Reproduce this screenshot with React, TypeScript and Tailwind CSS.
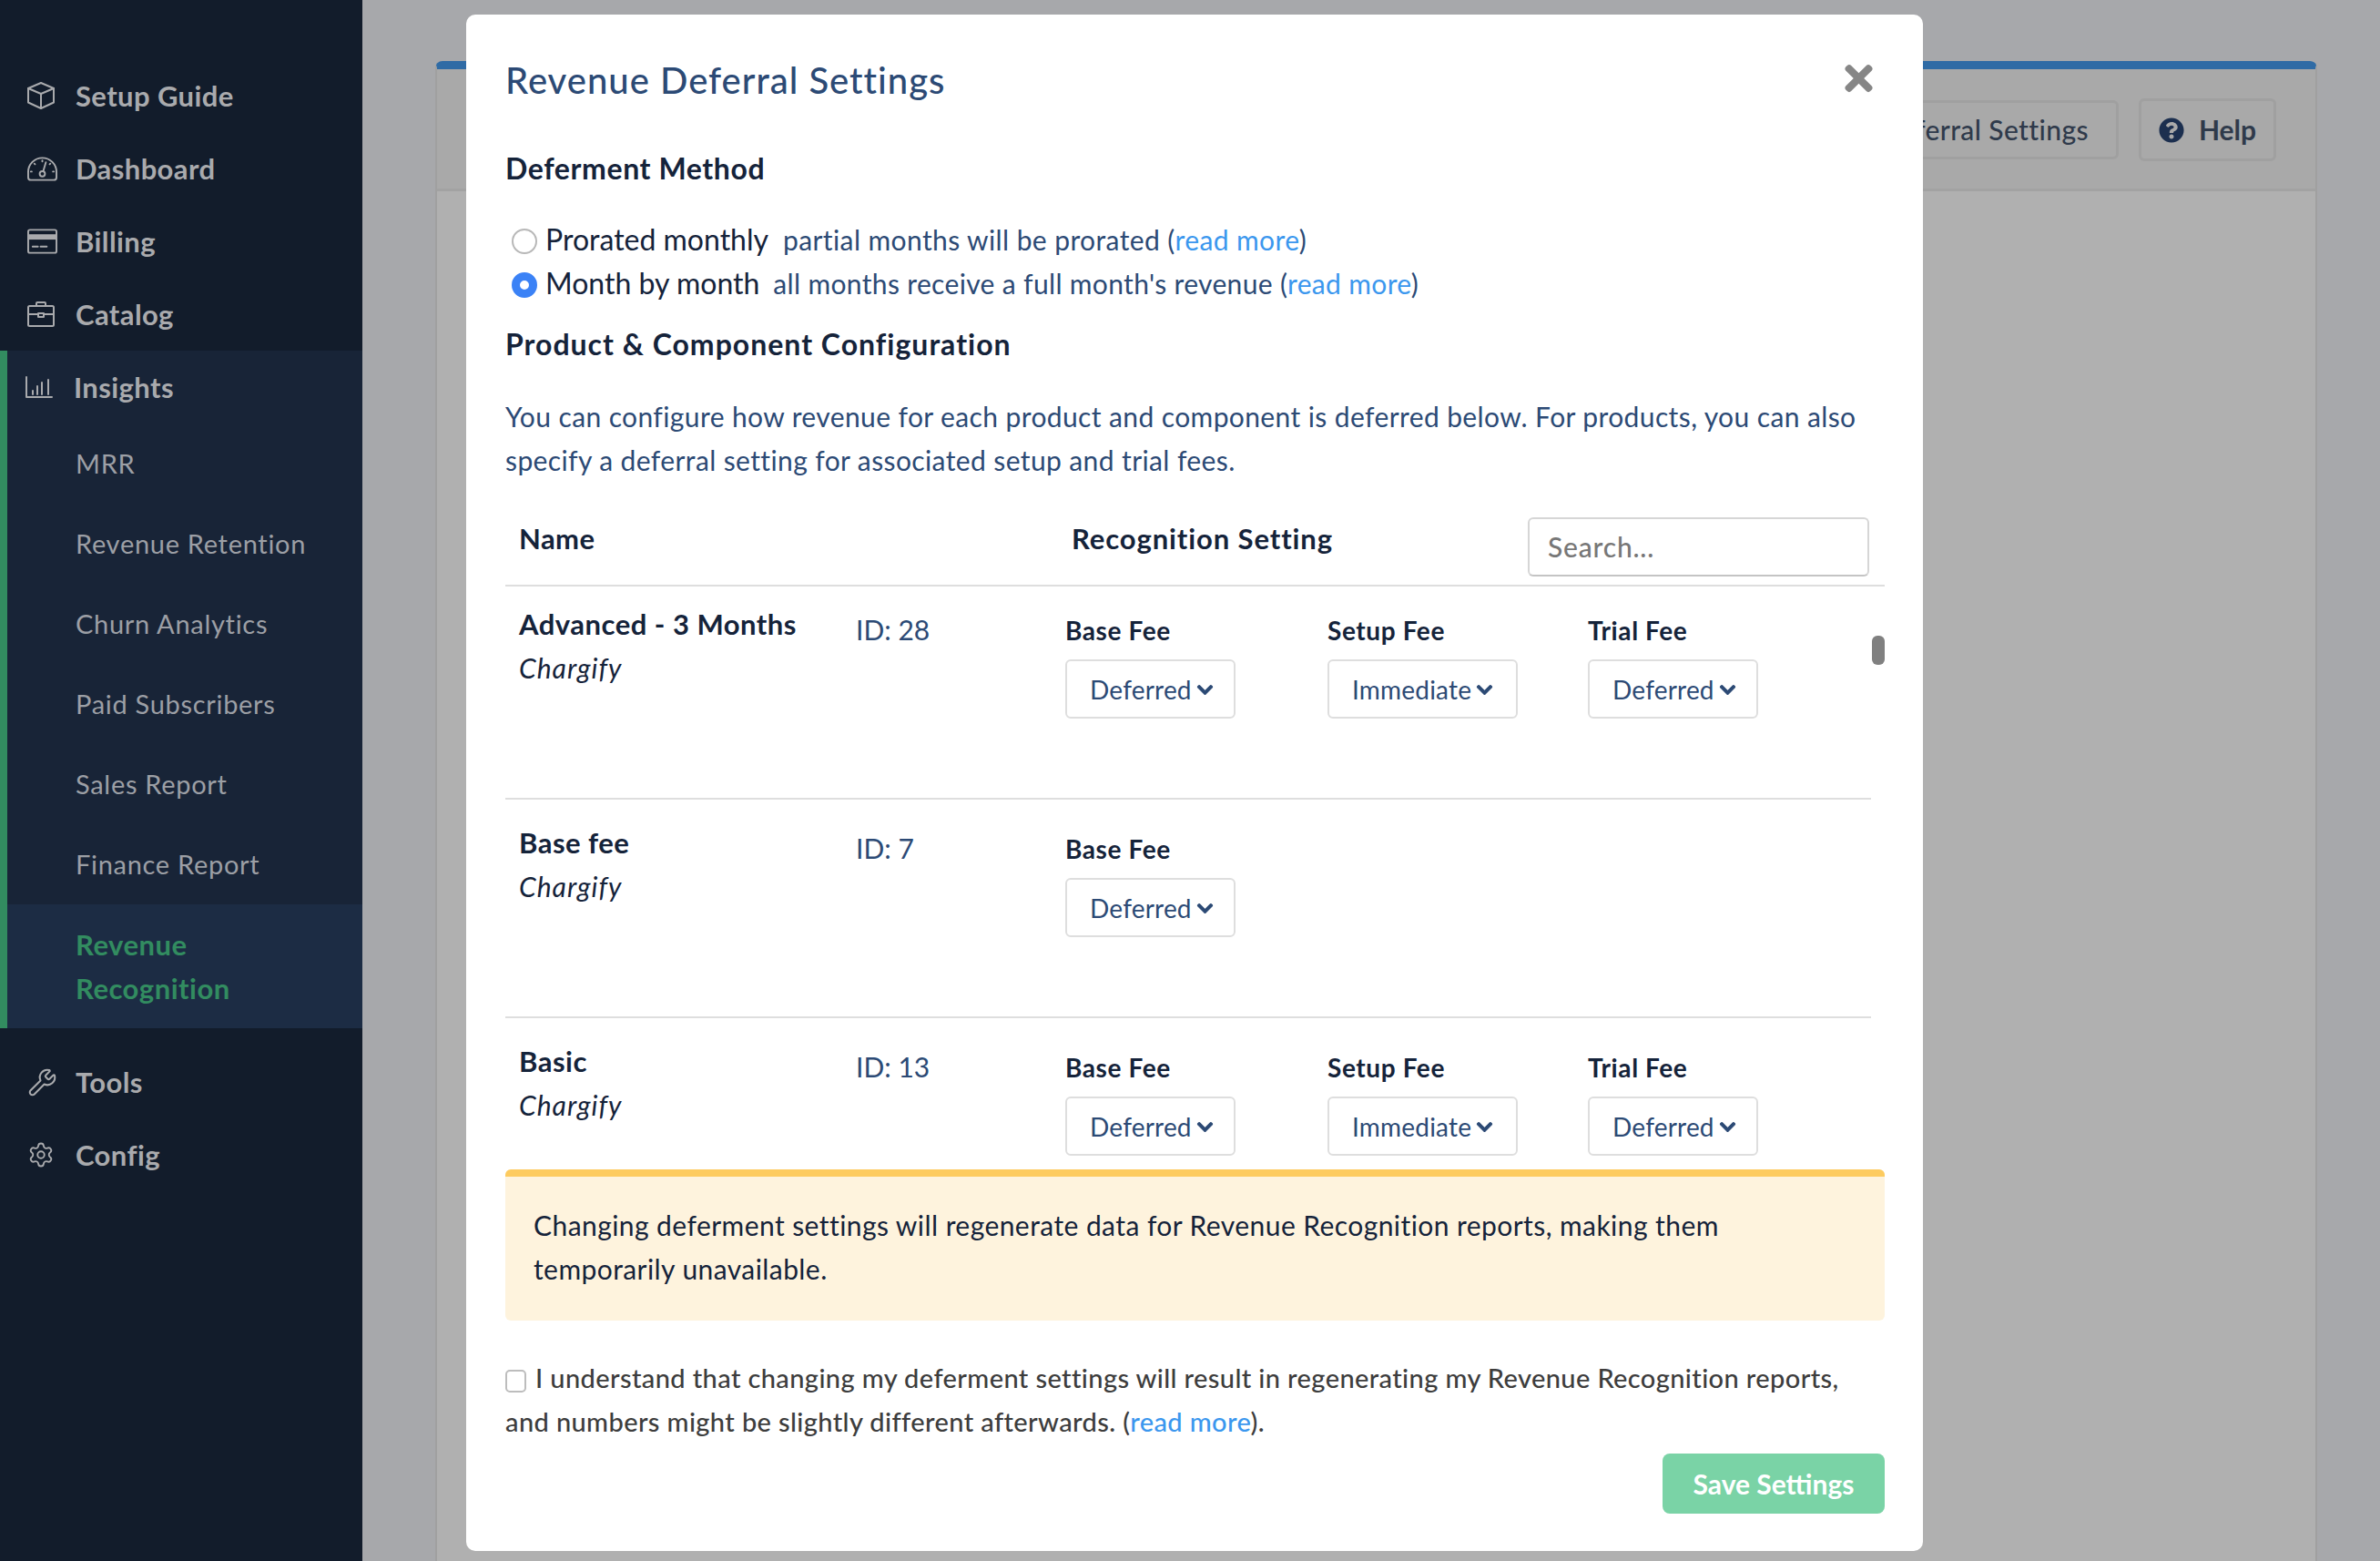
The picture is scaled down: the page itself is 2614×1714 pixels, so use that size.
import { Settings, Wrench } from "lucide-react";
import { FaChevronDown, FaQuestionCircle, FaTimes } from "react-icons/fa";

const iconBase = {
  fill: "none",
  stroke: "currentColor",
  strokeWidth: 2,
  strokeLinecap: "round" as const,
  strokeLinejoin: "round" as const,
};

function BoxIcon() {
  return (
    <svg viewBox="0 0 30 30" {...iconBase} className="h-[30px] w-[30px]">
      <path d="M15 1 L29 7 V22.5 L15 29 L1 22.5 V7 Z" />
      <path d="M1 7 L15 13 L29 7 M15 13 V29" />
    </svg>
  );
}

function GaugeIcon() {
  return (
    <svg viewBox="0 0 34 28" {...iconBase} className="h-[28px] w-[33px]">
      <path d="M4 27 H30 Q33 27 33 24 V18 A16 16 0 0 0 1 18 V24 Q1 27 4 27 Z" />
      <circle cx="17" cy="20" r="3" />
      <path d="M18 17 L21 7" />
      <path d="M17 5 V6 M8 8.5 L8.7 9.2 M26 8.5 L25.3 9.2 M4 17.5 H5 M29 17.5 H30" />
    </svg>
  );
}

function CardIcon() {
  return (
    <svg viewBox="0 0 34 28" {...iconBase} className="h-[28px] w-[33px]">
      <rect x="1" y="1" width="32" height="26" rx="2" />
      <rect x="1" y="6" width="32" height="6" fill="currentColor" stroke="none" />
      <path d="M6 20 H12 M15 20 H22" />
    </svg>
  );
}

function BriefcaseIcon() {
  return (
    <svg viewBox="0 0 30 28" {...iconBase} className="h-[28px] w-[30px]">
      <rect x="1" y="5" width="28" height="22" rx="1.5" />
      <path d="M10 5 V2 Q10 1 11 1 H19 Q20 1 20 2 V5" />
      <path d="M1 14 H12 M18 14 H29" />
      <rect x="12" y="13" width="6" height="4" />
    </svg>
  );
}

function ChartIcon() {
  return (
    <svg viewBox="0 0 30 24" {...iconBase} className="h-[24px] w-[30px]">
      <path d="M1 1 V23 H29" />
      <path d="M8 16 V20 M13 11 V20 M18 7 V20 M25 4 V20" />
    </svg>
  );
}

function NavItem({ icon, label }: { icon: React.ReactNode; label: string }) {
  return (
    <div className="flex h-20 items-center text-[31px] font-bold tracking-[.4px] text-[#a9aaad]">
      <div className="flex w-[83px] justify-start pl-[30px]">{icon}</div>
      <span>{label}</span>
    </div>
  );
}

function SubItem({ label }: { label: string }) {
  return (
    <div className="flex h-[88px] items-center pl-[75px] text-[29px] tracking-[.7px] text-[#9c9fa5]">
      {label}
    </div>
  );
}

function Sidebar() {
  return (
    <aside className="h-full w-[398px] shrink-0 bg-[#121c2b] pt-[65px]">
      <NavItem icon={<BoxIcon />} label="Setup Guide" />
      <NavItem icon={<GaugeIcon />} label="Dashboard" />
      <NavItem icon={<CardIcon />} label="Billing" />
      <NavItem icon={<BriefcaseIcon />} label="Catalog" />
      <div className="border-l-8 border-[#328c60] bg-[#182437]">
        <div className="flex h-20 items-center text-[31px] font-bold tracking-[.4px] text-[#a9aaad]">
          <div className="w-[73px] pl-5">
            <ChartIcon />
          </div>
          <span>Insights</span>
        </div>
        <SubItem label="MRR" />
        <SubItem label="Revenue Retention" />
        <SubItem label="Churn Analytics" />
        <SubItem label="Paid Subscribers" />
        <SubItem label="Sales Report" />
        <SubItem label="Finance Report" />
        <div className="bg-[#1c2c44] py-5 pl-[75px] text-[31px] leading-[48px] font-bold tracking-[.5px] text-[#328c60]">
          Revenue
          <br />
          Recognition
        </div>
      </div>
      <div className="mt-[19px]">
        <NavItem icon={<Wrench className="h-[33px] w-[33px]" strokeWidth={1.5} />} label="Tools" />
        <NavItem icon={<Settings className="h-[30px] w-[30px]" strokeWidth={1.5} />} label="Config" />
      </div>
    </aside>
  );
}

function Select({ value, width }: { value: string; width: string }) {
  return (
    <div
      className={`flex h-[65px] items-center rounded-md border-2 border-[#dedede] pt-px pl-[25px] text-[28px] tracking-[.2px] text-[#2c4a75] ${width}`}
    >
      <span>{value}</span>
      <FaChevronDown className="ml-[5px] h-[19px] w-[19px] stroke-current stroke-[30] text-[#2c4a75]" />
    </div>
  );
}

function Fee({ label, value, width, col }: { label: string; value: string; width: string; col: string }) {
  return (
    <div className={col}>
      <div className="text-[28px] leading-[48px] font-bold tracking-[.6px] text-[#15233a]">{label}</div>
      <div className="mt-2">
        <Select value={value} width={width} />
      </div>
    </div>
  );
}

function Row({
  name,
  id,
  fees,
  first,
}: {
  name: string;
  id: number;
  fees: "all" | "base";
  first?: boolean;
}) {
  return (
    <div
      className={`flex border-b-2 border-[#dedede] ${first ? "h-[234px] pt-[17px]" : "h-[240px] pt-[23px]"}`}
    >
      <div className="w-[385px] pl-[15px] text-[#15233a]">
        <div className="text-[31px] leading-[48px] font-bold tracking-[.5px]">{name}</div>
        <div className="text-[30px] leading-[48px] tracking-[1px] italic">Chargify</div>
      </div>
      <div className="mt-[6px] w-[230px] text-[30px] leading-[48px] text-[#2c4a75]">ID: {id}</div>
      <div className="mt-[7px] flex">
        <Fee label="Base Fee" value="Deferred" width="w-[187px]" col="w-[288px]" />
        {fees === "all" && <Fee label="Setup Fee" value="Immediate" width="w-[209px]" col="w-[286px]" />}
        {fees === "all" && <Fee label="Trial Fee" value="Deferred" width="w-[187px]" col="w-[287px]" />}
      </div>
    </div>
  );
}

function Modal() {
  return (
    <div className="absolute top-4 left-[512px] flex h-[1687px] w-[1600px] flex-col rounded-[10px] bg-white pt-12 pr-[42px] pl-[43px]">
      <div className="flex items-center justify-between pr-[12px]">
        <h1 className="text-[40px] leading-[48px] font-medium tracking-[1px] text-[#2c4a75]">
          Revenue Deferral Settings
        </h1>
        <FaTimes className="-mt-1 h-[44px] w-[33px] text-[#868686]" />
      </div>

      <h2 className="mt-[49px] text-[32px] leading-[48px] font-bold tracking-[.6px] text-[#15233a]">
        Deferment Method
      </h2>

      <div className="mt-[30px]">
        <div className="flex h-[48px] items-center pl-[7px]">
          <span className="h-7 w-7 translate-y-[2px] rounded-full border-2 border-[#b8b8b8] bg-white" />
          <span className="ml-[9px] text-[32px] text-[#15233a]">Prorated monthly</span>
          <span className="ml-4 text-[30px] tracking-[.4px] text-[#2c4a75]">
            partial months will be prorated (<span className="text-[#3b97ee]">read more</span>)
          </span>
        </div>
        <div className="flex h-[48px] items-center pl-[7px]">
          <span className="h-7 w-7 translate-y-[2px] rounded-full border-[9px] border-[#3b82f6] bg-white" />
          <span className="ml-[9px] text-[32px] text-[#15233a]">Month by month</span>
          <span className="ml-[15px] text-[30px] tracking-[.34px] text-[#2c4a75]">
            all months receive a full month's revenue (<span className="text-[#3b97ee]">read more</span>)
          </span>
        </div>
      </div>

      <h2 className="mt-[19px] text-[32px] leading-[48px] font-bold tracking-[1px] text-[#15233a]">
        Product &amp; Component Configuration
      </h2>

      <p className="mt-[31px] text-[30px] leading-[48px] tracking-[.39px] text-[#2c4a75]">
        You can configure how revenue for each product and component is deferred below. For products, you can also
        <br />
        specify a deferral setting for associated setup and trial fees.
      </p>

      <div className="flex h-[115px] items-start border-b-2 border-[#dedede] pt-[39px]">
        <div className="-mt-px w-[622px] pl-[15px] text-[31px] leading-[48px] font-bold tracking-[.4px] text-[#15233a]">
          Name
        </div>
        <div className="-mt-px w-[501px] text-[31px] leading-[48px] font-bold tracking-[.9px] text-[#15233a]">
          Recognition Setting
        </div>
        <div className="flex h-[65px] w-[375px] items-center rounded-md border-2 border-[#d6d6d6] border-b-[#c4c4c4] pl-5 text-[30px] font-medium tracking-[.8px] text-[#777777]">
          Search...
        </div>
      </div>

      <div className="relative h-[640px] overflow-hidden pr-[15px]">
        <Row name="Advanced - 3 Months" id={28} fees="all" first />
        <Row name="Base fee" id={7} fees="base" />
        <Row name="Basic" id={13} fees="all" />
        <div className="absolute top-[54px] right-0 h-8 w-[14px] rounded-md bg-[#808080]" />
      </div>

      <div className="h-[166px] rounded-md border-t-8 border-[#fdcb5f] bg-[#fef3dd] pt-[29px] pl-[31px] text-[30px] leading-[48px] tracking-[.43px] text-[#15233a]">
        Changing deferment settings will regenerate data for Revenue Recognition reports, making them
        <br />
        temporarily unavailable.
      </div>

      <p className="mt-[39px] text-[29px] leading-[48px] font-medium tracking-[.39px] text-[#3d3d3d]">
        <span className="mr-[10px] inline-block h-[25px] w-[23px] translate-y-[5px] rounded-[5px] border-2 border-[#bdbdbd] bg-white" />
        I understand that changing my deferment settings will result in regenerating my Revenue Recognition reports,
        <br />
        and numbers might be slightly different afterwards. (<span className="text-[#3b97ee]">read more</span>).
      </p>

      <button
        type="button"
        className="mt-[11px] h-[66px] w-[244px] self-end rounded-lg bg-[#7ad3a6] text-[30px] font-bold text-white"
      >
        Save Settings
      </button>
    </div>
  );
}

export default function App() {
  return (
    <div className="relative flex h-[1714px] w-[2614px] overflow-hidden bg-[#a7a8ab] font-[Lato,sans-serif]">
      <Sidebar />
      <main className="flex flex-1 flex-col pt-[67px] pr-[69px] pl-[80px]">
        <div className="flex flex-1 flex-col rounded-t-lg border-x-2 border-t-[9px] border-x-[#a0a0a0] border-t-[#2f6ba5] bg-[#b0b0b0]">
          <div className="flex h-[134px] items-start justify-end gap-[22px] border-b-[3px] border-[#a2a2a2] bg-[#a9a9a9] pt-[32px] pr-[43px]">
            <div className="mt-[2px] flex h-[65px] items-center rounded-md border-[3px] border-[#a0a0a0] px-[30px] text-[30px] font-medium tracking-[.4px] text-[#2f3a4b]">
              Revenue Deferral Settings
            </div>
            <div className="flex h-[69px] w-[151px] items-center justify-center gap-[16px] rounded-md border-[3px] border-[#a0a0a0] text-[30px] font-bold text-[#2f3a4b]">
              <FaQuestionCircle className="h-7 w-7 text-[#1c2f4f]" />
              Help
            </div>
          </div>
        </div>
      </main>
      <Modal />
    </div>
  );
}
